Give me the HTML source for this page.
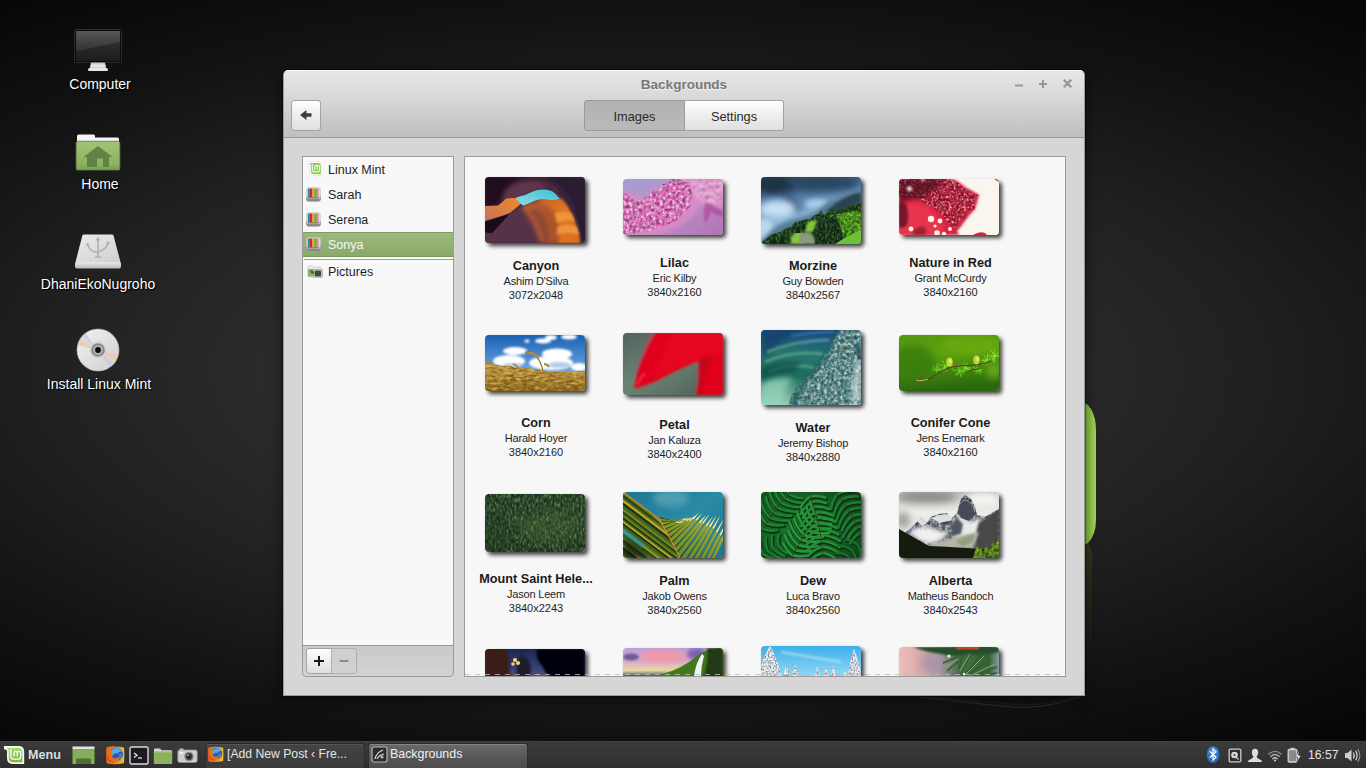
<!DOCTYPE html>
<html lang="en">
<head>
<meta charset="utf-8">
<title>Backgrounds</title>
<style>
*{box-sizing:border-box;margin:0;padding:0}
html,body{width:1366px;height:768px;overflow:hidden;background:#0c0c0c}
body{position:relative;font-family:"Liberation Sans","DejaVu Sans",sans-serif;color:#222;
  background:radial-gradient(ellipse 1090px 460px at 650px 372px,#343434 0%,#2d2d2d 30%,#202020 56%,#121212 78%,#070707 100%);
}
.abs{position:absolute}
/* desktop icons */
.dlabel{position:absolute;width:200px;text-align:center;color:#fff;font-size:14px;line-height:16px;white-space:nowrap;
  text-shadow:1px 1px 1px #000,0 0 2px rgba(0,0,0,.8)}
/* window */
#win{position:absolute;left:283px;top:70px;width:802px;height:626px;background:#d6d6d6;border:1px solid #9a9a9a;border-top-color:#f4f4f4;
  border-radius:5px 5px 0 0;box-shadow:0 3px 14px rgba(0,0,0,.55),0 0 0 1px rgba(0,0,0,.35)}
#hdr{position:absolute;left:0;top:0;width:800px;height:67px;border-radius:4px 4px 0 0;
  background:linear-gradient(#e7e7e7 0%,#dcdcdc 30%,#bfbfbf 100%);border-bottom:1px solid #9a9a9a}
#title{position:absolute;left:0;width:800px;top:5px;text-align:center;font-weight:bold;font-size:13.5px;line-height:18px;color:#787878;text-shadow:0 1px 0 rgba(255,255,255,.6)}
.btn{position:absolute;border:1px solid #a3a3a3;border-radius:3px;background:linear-gradient(#fefefe,#dfdfdf);font-size:12.8px;color:#2a2a2a;text-align:center}
.btn.on{background:linear-gradient(#b2b2b2,#bababa);border-color:#9a9a9a}
/* sidebar */
#side{position:absolute;left:18px;top:85px;width:152px;height:490px;background:#f8f8f8;border:1px solid #9b9b9b}
.row{position:absolute;left:0;width:150px;height:25px;font-size:12.5px;line-height:27px;padding-left:25px;color:#1e1e1e;white-space:nowrap}
.row svg{position:absolute;left:3.5px;top:4px}
#sidebar-tb{position:absolute;left:18px;top:574px;width:152px;height:32px;border:1px solid #9b9b9b;border-radius:0 0 4px 4px;background:linear-gradient(#c9c9c9,#d3d3d3)}
/* icon view */
#view{position:absolute;left:180px;top:85px;width:602px;height:521px;background:#f7f7f7;border:1px solid #9b9b9b;overflow:hidden}
.th{position:absolute;width:100px;border-radius:4px;overflow:hidden;box-shadow:3px 3px 4px rgba(0,0,0,.75)}
.th svg{display:block}
.cap{position:absolute;width:138px;text-align:center;white-space:nowrap;color:#1f1f1f;font-size:11px;line-height:14.4px;letter-spacing:-.2px}
.cap i{font-style:normal;letter-spacing:0}
.cap b{display:block;font-size:12.7px;line-height:16px;color:#1a1a1a;letter-spacing:0}
/* panel */
#panel{position:absolute;left:0;top:741px;width:1366px;height:27px;background:linear-gradient(#3b3b3b,#353535 50%,#2f2f2f);border-top:1px solid #404040;color:#e8e8e8;font-size:13.6px}
</style>
</head>
<body>

<svg width="0" height="0" style="position:absolute"><defs>
  <g id="bookico"><rect x=".3" y=".3" width="15.400" height="15.200" rx="2.500" fill="#c9c9c9"/><rect x=".3" y="9" width="15.400" height="6.500" rx="2.500" fill="#8a8a8a"/><rect x="1.300" y="1" width="13.400" height="11.800" rx="1.200" fill="#dedede"/><rect x="2" y="1.600" width="1.600" height="9.600" fill="#2c7fc4"/><rect x="3.600" y="1.600" width="3.300" height="9.600" fill="#d02a1e"/><rect x="6.900" y="1.600" width="1.900" height="9.600" fill="#f4a800"/><rect x="8.800" y="1.600" width="2.800" height="9.600" fill="#7aa43a"/><rect x="11.600" y="1.600" width="2" height="9.600" fill="#e58aa8"/><rect x="2" y="11" width="11.600" height="1.300" fill="#6e6e6e"/></g>
  <g id="ffx"><defs><linearGradient id="ffg" x1="0" y1="0" x2="1" y2="0"><stop offset="0" stop-color="#e4641a"/><stop offset=".6" stop-color="#ee8c1c"/><stop offset="1" stop-color="#f6c524"/></linearGradient></defs>
    <path d="M1.500 1.200q4-1 8.500-.8 5 0 9 1.200 .6 7 0 15.500-4 1.200-9 1.200t-8.500-1q-.8-8 0-16.100z" fill="url(#ffg)"/>
    <circle cx="11.200" cy="8.300" r="6.700" fill="#2a5cb8"/>
    <path d="M6 5q3-4 8-3 3 1.500 3.500 4-2-1-3.500 0-1.500 2-4 1.500-2 .5-2.500 2.500-2-2-1.500-5z" fill="#58a8e6"/>
    <path d="M15 7q2 1 2 3.500-1 3-3.500 4 1.500-2 .5-4 0-2 1-3.500z" fill="#3f84d8"/>
    <path d="M1.500 3.500q1.500 0 2.500 1.500 1.500-2 3-2-1.500 2-1 4 1 0 2 1-1.500 1-1 2.500 1 2 3.500 2 2.500-.5 3.500-2 .5 2.500-1.500 4.500-3 2-6.500 1-3.500-1.500-4.500-5.500-.5-3.500 0-7z" fill="#e8701a"/>
    <path d="M1.500 4q0 5 2 8.500 2.500 3.500 6.500 4-4.500 .5-7-3-2.500-4-1.500-9.500z" fill="#c8401a"/>
  </g>
</defs></svg>
<!-- WALLPAPER-EXTRAS -->
<svg class="abs" style="left:1070px;top:395px" width="40" height="310" viewBox="0 0 40 310">
  <defs><linearGradient id="mg" x1="0" y1="0" x2="1" y2="0"><stop offset="0" stop-color="#6f9f34"/><stop offset=".7" stop-color="#8cc443"/><stop offset="1" stop-color="#a4d65a"/></linearGradient>
  <linearGradient id="mr" x1="0" y1="0" x2="0" y2="1"><stop offset="0" stop-color="#31451c" stop-opacity=".75"/><stop offset="1" stop-color="#1a2410" stop-opacity="0"/></linearGradient></defs>
  <path d="M0 2q14 2 21 12 5 8 5 22v88q0 16-8 24-6 5-18 6z" fill="url(#mg)"/>
  <path d="M0 154q12-1 18-6 6 6 4 30v100q0 20-22 24z" fill="url(#mr)"/>
</svg>

<svg class="abs" style="left:900px;top:690px" width="200" height="24" viewBox="0 0 200 24"><path d="M20 7Q80 14 118 17.500Q150 18 186 5" fill="none" stroke="#2f3d25" stroke-width="1.200" opacity=".75"/><path d="M30 7Q90 12 120 15Q150 15 180 5" fill="none" stroke="#252e20" stroke-width="1" opacity=".6"/></svg>
<!-- DESKTOP-ICONS -->
<svg class="abs" style="left:68px;top:24px" width="60" height="52" viewBox="0 0 60 52">
  <defs>
    <linearGradient id="scr" x1="0" y1="0" x2="0" y2="1"><stop offset="0" stop-color="#4a4a4a"/><stop offset=".5" stop-color="#2a2a2a"/><stop offset="1" stop-color="#1c1c1c"/></linearGradient>
    <linearGradient id="std" x1="0" y1="0" x2="0" y2="1"><stop offset="0" stop-color="#bdbdbd"/><stop offset=".6" stop-color="#f2f2f2"/><stop offset="1" stop-color="#b5b5b5"/></linearGradient>
  </defs>
  <rect x="6.5" y="5.5" width="47" height="33" rx="1" fill="#0b0b0b" stroke="#2c2c2c"/>
  <rect x="8" y="7" width="44" height="30" fill="url(#scr)"/>
  <path d="M8 7h44v11L8 27z" fill="#fff" opacity=".08"/>
  <path d="M23 38.5h14l1.2 6H21.800z" fill="url(#std)"/>
  <rect x="20" y="44" width="20" height="3" rx="1.5" fill="#e6e6e6"/>
</svg>
<div class="dlabel" style="left:0px;top:76.4px;">Computer</div>

<svg class="abs" style="left:70px;top:130px" width="56" height="44" viewBox="0 0 56 44">
  <defs>
    <linearGradient id="fld" x1="0" y1="0" x2="0" y2="1"><stop offset="0" stop-color="#a3c377"/><stop offset=".8" stop-color="#8db160"/><stop offset="1" stop-color="#7a9c50"/></linearGradient>
  </defs>
  <path d="M7 11V6.200Q7 4.500 8.700 4.500H23.500Q25 4.500 25 6V7.500H47.500Q49 7.500 49 9V12z" fill="#f4f4f4"/>
  <path d="M7 10h42v2H7z" fill="#d8d8d8"/>
  <rect x="6.200" y="11.500" width="43.600" height="28.500" rx="1.500" fill="url(#fld)" stroke="#6c8c48" stroke-width=".8"/>
  <path d="M28 16L42.500 27H39V37H33V28.500H27V37H17V27H13.500z" fill="#5f8246"/>
</svg>
<div class="dlabel" style="left:0px;top:176.4px;">Home</div>

<svg class="abs" style="left:70px;top:230px" width="56" height="44" viewBox="0 0 56 44">
  <defs>
    <linearGradient id="drv" x1="0" y1="0" x2="1" y2="1"><stop offset="0" stop-color="#ececec"/><stop offset="1" stop-color="#cfcfcf"/></linearGradient>
    <linearGradient id="drf" x1="0" y1="0" x2="0" y2="1"><stop offset="0" stop-color="#e9e9e9"/><stop offset="1" stop-color="#b9b9b9"/></linearGradient>
  </defs>
  <path d="M12.500 5Q13 4.500 14 4.500H42Q43 4.500 43.500 5.500L50.500 32H5.500z" fill="url(#drv)"/>
  <path d="M5 33.500Q5 32 6.500 32H49.500Q51 32 51 33.500V36.500Q51 38.500 49 38.500H7Q5 38.500 5 36.500z" fill="url(#drf)"/>
  <g fill="none" stroke="#b2b2b2" stroke-width="1.600" stroke-linecap="round"><path d="M28 9v18"/><path d="M18 15q2 7 10 7.500"/><path d="M38 13q-1 6 -10 9"/><path d="M25.500 27h5"/></g>
  <path d="M28 7l2.800 3.500h-5.600z" fill="#b2b2b2"/><circle cx="17.500" cy="14.500" r="1.500" fill="#b2b2b2"/><rect x="36.500" y="11.500" width="3" height="2.600" fill="#b2b2b2"/>
</svg>
<div class="dlabel" style="left:-2px;top:276.4px;">DhaniEkoNugroho</div>

<svg class="abs" style="left:74px;top:326px" width="48" height="48" viewBox="0 0 48 48">
  <defs>
    <filter id="cdb"><feGaussianBlur stdDeviation=".7"/></filter><linearGradient id="cdg" x1="0" y1="0" x2="1" y2="1"><stop offset="0" stop-color="#f5f5f5"/><stop offset=".5" stop-color="#e0e0e0"/><stop offset="1" stop-color="#cfcfcf"/></linearGradient>
  </defs>
  <circle cx="24" cy="24" r="21" fill="url(#cdg)"/>
  <g transform="rotate(-20 24 24)" filter="url(#cdb)">
  <path d="M24 24L7 13A21 21 0 0 1 10.500 8z" fill="#f4c2b2" opacity=".85"/>
  <path d="M24 24L10.500 8A21 21 0 0 1 14 5.500z" fill="#c4e8b2" opacity=".85"/>
  <path d="M24 24L14 5.500A21 21 0 0 1 18 4z" fill="#d6bef0" opacity=".85"/>
  <path d="M24 24L41 35A21 21 0 0 1 37.500 40z" fill="#f4c2b2" opacity=".85"/>
  <path d="M24 24L37.500 40A21 21 0 0 1 34 42.500z" fill="#c4e8b2" opacity=".85"/>
  <path d="M24 24L34 42.500A21 21 0 0 1 30 44z" fill="#d6bef0" opacity=".85"/>
  </g>
  <circle cx="24" cy="24" r="21" fill="none" stroke="#bdbdbd" stroke-width=".6"/>
  <circle cx="24" cy="24" r="8.400" fill="#d4d4d4"/>
  <circle cx="24" cy="24" r="6.800" fill="#8a8a8a"/>
  <circle cx="24" cy="24" r="4.800" fill="#b4b4b4"/>
  <circle cx="24" cy="24" r="2.900" fill="#0c0c0c"/>
</svg>
<div class="dlabel" style="left:-1px;top:376.4px;">Install Linux Mint</div>

<div id="win">
  <div id="hdr">
    <div id="title">Backgrounds</div>
    <!-- WINCTL -->
    <svg class="abs" style="left:724px;top:3px" width="70" height="20" viewBox="0 0 70 20">
      <g fill="none" stroke="#969696" stroke-width="2">
        <path d="M7 11.500h8"/>
        <path d="M31 10h8M35 6v8"/>
        <path d="M55.800 5.800l7.400 7.400M63.200 5.800l-7.400 7.400" stroke-width="2.300"/>
      </g>
    </svg>
    <!-- TOOLBAR -->
    <div class="btn" style="left:7px;top:29px;width:30px;height:31px">
      <svg class="abs" style="left:6px;top:6px" width="16" height="16" viewBox="0 0 16 16"><path d="M2 8l6.500-5v3.300H13.500v3.400H8.500V13z" fill="#3c3c3c"/></svg>
    </div>
    <div class="btn on" style="left:300px;top:29px;width:101px;height:31px;border-radius:3px 0 0 3px;line-height:31px">Images</div>
    <div class="btn" style="left:400px;top:29px;width:100px;height:31px;border-radius:0 3px 3px 0;line-height:31px;border-left-color:#9a9a9a">Settings</div>
  </div>
  <div id="side">
    <!-- SIDEROWS -->
    <div class="row" style="top:0">
      <svg style="top:3.500px" width="15.500" height="15" viewBox="-.5 -.5 21.200 19" preserveAspectRatio="none"><path d="M0 0H14.500Q20.200 0 20.200 5.700V18H9Q3 18 3 12V5Q3 3.200 0 3.200z" fill="#fff" stroke="#dadada" stroke-width=".8"/><path d="M2.200 2H14.300Q18.400 2 18.400 6V16.300H9.200Q4.800 16.300 4.800 12V4.600Q4.800 2.800 2.200 2z" fill="#8fcc52"/><path d="M6.800 3.200V10.800Q6.800 13.200 9.200 13.200H14.400Q16.600 13.200 16.600 10.800V7.200Q16.600 5.300 14.950 5.300Q13.300 5.300 13.300 7.200V10.600M13.300 7.200Q13.300 5.300 11.650 5.300Q10 5.300 10 7.200V10.600" fill="none" stroke="#fff" stroke-width="1.300"/></svg>
      Linux Mint</div>
    <div class="row" style="top:25px"><svg style="left:3px;top:4.500px" width="15" height="15" viewBox="0 0 16 16"><use href="#bookico"/></svg>Sarah</div>
    <div class="row" style="top:50px"><svg style="left:3px;top:4.500px" width="15" height="15" viewBox="0 0 16 16"><use href="#bookico"/></svg>Serena</div>
    <div class="row" style="top:75px;height:24.5px;background:linear-gradient(#9cb97e,#8aa968);border-top:1px solid #7f9a62;border-bottom:1px solid #7d985f;color:#f6f6f6;line-height:25px"><svg style="left:3px;top:3.500px" width="15" height="15" viewBox="0 0 16 16"><use href="#bookico"/></svg>Sonya</div>
    <div class="abs" style="left:1px;top:101.5px;width:149px;height:1px;background:#9f9f9f"></div>
    <div class="row" style="top:102px">
      <svg width="16" height="16" viewBox="0 0 16 16"><path d="M.800 4q0-1 1-1h3.500l1 1.200h6.900q1 0 1 1v7.600q0 1-1 1H1.800q-1 0-1-1z" fill="#eee" stroke="#bdbdbd" stroke-width=".6"/><rect x="1" y="6" width="12.800" height="7.600" rx=".8" fill="#8bb35f"/><rect x="6.500" y="6.500" width="8.800" height="8" fill="#f4f4f4" stroke="#9a9a9a" stroke-width=".6"/><rect x="7.500" y="7.500" width="6.800" height="6" fill="#3e4a37"/><path d="M3 8.500q1.500-1.500 3-.5t1 2.500q-2 .5-3-.5z" fill="#555"/></svg>
      Pictures</div>
  </div>
  <div id="sidebar-tb">
    <!-- SIDEBTNS -->
    <div class="btn" style="left:3px;top:2px;width:26px;height:26px;border-radius:3px 0 0 3px"><svg class="abs" style="left:6px;top:6px" width="12" height="12" viewBox="0 0 12 12"><path d="M1 6h10M6 1v10" stroke="#1a1a1a" stroke-width="2" fill="none"/></svg></div>
    <div class="btn" style="left:28px;top:2px;width:26px;height:26px;border-radius:0 3px 3px 0;background:linear-gradient(#cfcfcf,#d2d2d2);border-color:#b0b0b0"><svg class="abs" style="left:6px;top:6px" width="12" height="12" viewBox="0 0 12 12"><path d="M1.500 6h9" stroke="#8e8e8e" stroke-width="2" fill="none"/></svg></div>
  </div>
  <div id="view">
    <!-- THUMBS -->
    <svg width="0" height="0" style="position:absolute"><defs>
      <filter id="b1" x="-30%" y="-30%" width="160%" height="160%"><feGaussianBlur stdDeviation="1"/></filter>
      <filter id="b2" x="-50%" y="-50%" width="200%" height="200%"><feGaussianBlur stdDeviation="2"/></filter>
      <filter id="b3" x="-60%" y="-60%" width="220%" height="220%"><feGaussianBlur stdDeviation="3.500"/></filter>
      <filter id="bh" x="-5%" y="-5%" width="110%" height="110%"><feGaussianBlur stdDeviation=".5"/></filter>
      <filter id="gr1" x="0" y="0" width="100%" height="100%" color-interpolation-filters="sRGB"><feTurbulence type="fractalNoise" baseFrequency=".3" numOctaves="2" seed="4" result="n"/><feColorMatrix in="n" type="matrix" values="0 0 0 0 1 0 0 0 0 1 0 0 0 0 1 3 0 0 0 -1.25"/><feComponentTransfer result="w"><feFuncA type="linear" slope="0.65"/></feComponentTransfer><feColorMatrix in="n" type="matrix" values="0 0 0 0 0 0 0 0 0 0 0 0 0 0 0 0 3 0 0 -1.3"/><feComponentTransfer result="k"><feFuncA type="linear" slope="0.4"/></feComponentTransfer><feComposite in="w" in2="SourceAlpha" operator="in" result="w2"/><feComposite in="k" in2="SourceAlpha" operator="in" result="k2"/><feMerge><feMergeNode in="SourceGraphic"/><feMergeNode in="w2"/><feMergeNode in="k2"/></feMerge></filter>
      <filter id="gr2" x="0" y="0" width="100%" height="100%" color-interpolation-filters="sRGB"><feTurbulence type="fractalNoise" baseFrequency=".55" numOctaves="2" seed="9" result="n"/><feColorMatrix in="n" type="matrix" values="0 0 0 0 1 0 0 0 0 1 0 0 0 0 1 2.4 0 0 0 -1.1"/><feComponentTransfer result="w"><feFuncA type="linear" slope="0.5"/></feComponentTransfer><feColorMatrix in="n" type="matrix" values="0 0 0 0 0 0 0 0 0 0 0 0 0 0 0 0 2.8 0 0 -1.15"/><feComponentTransfer result="k"><feFuncA type="linear" slope="0.45"/></feComponentTransfer><feComposite in="w" in2="SourceAlpha" operator="in" result="w2"/><feComposite in="k" in2="SourceAlpha" operator="in" result="k2"/><feMerge><feMergeNode in="SourceGraphic"/><feMergeNode in="w2"/><feMergeNode in="k2"/></feMerge></filter>
      <filter id="gr3" x="0" y="0" width="100%" height="100%" color-interpolation-filters="sRGB"><feTurbulence type="fractalNoise" baseFrequency=".12 .3" numOctaves="2" seed="2" result="n"/><feColorMatrix in="n" type="matrix" values="0 0 0 0 1 0 0 0 0 1 0 0 0 0 1 2.6 0 0 0 -1.15"/><feComponentTransfer result="w"><feFuncA type="linear" slope="0.5"/></feComponentTransfer><feColorMatrix in="n" type="matrix" values="0 0 0 0 0 0 0 0 0 0 0 0 0 0 0 0 2.6 0 0 -1.15"/><feComponentTransfer result="k"><feFuncA type="linear" slope="0.4"/></feComponentTransfer><feComposite in="w" in2="SourceAlpha" operator="in" result="w2"/><feComposite in="k" in2="SourceAlpha" operator="in" result="k2"/><feMerge><feMergeNode in="SourceGraphic"/><feMergeNode in="w2"/><feMergeNode in="k2"/></feMerge></filter>
      <filter id="grg" x="0" y="0" width="100%" height="100%" color-interpolation-filters="sRGB"><feTurbulence type="fractalNoise" baseFrequency=".3" numOctaves="2" seed="7" result="n"/><feColorMatrix in="n" type="matrix" values="0 0 0 0 0.62 0 0 0 0 0.86 0 0 0 0 0.22 3 0 0 0 -1.25"/><feComponentTransfer result="w"><feFuncA type="linear" slope="0.7"/></feComponentTransfer><feColorMatrix in="n" type="matrix" values="0 0 0 0 0.03 0 0 0 0 0.16 0 0 0 0 0.07 0 3 0 0 -1.25"/><feComponentTransfer result="k"><feFuncA type="linear" slope="0.7"/></feComponentTransfer><feComposite in="w" in2="SourceAlpha" operator="in" result="w2"/><feComposite in="k" in2="SourceAlpha" operator="in" result="k2"/><feMerge><feMergeNode in="SourceGraphic"/><feMergeNode in="w2"/><feMergeNode in="k2"/></feMerge></filter>
      <filter id="grf" x="0" y="0" width="100%" height="100%" color-interpolation-filters="sRGB"><feTurbulence type="fractalNoise" baseFrequency=".45 .3" numOctaves="2" seed="11" result="n"/><feColorMatrix in="n" type="matrix" values="0 0 0 0 0.42 0 0 0 0 0.6 0 0 0 0 0.3 3 0 0 0 -1.2"/><feComponentTransfer result="w"><feFuncA type="linear" slope="0.6"/></feComponentTransfer><feColorMatrix in="n" type="matrix" values="0 0 0 0 0.06 0 0 0 0 0.14 0 0 0 0 0.08 0 3 0 0 -1.2"/><feComponentTransfer result="k"><feFuncA type="linear" slope="0.75"/></feComponentTransfer><feComposite in="w" in2="SourceAlpha" operator="in" result="w2"/><feComposite in="k" in2="SourceAlpha" operator="in" result="k2"/><feMerge><feMergeNode in="SourceGraphic"/><feMergeNode in="w2"/><feMergeNode in="k2"/></feMerge></filter>
      <filter id="grr" x="0" y="0" width="100%" height="100%" color-interpolation-filters="sRGB"><feTurbulence type="fractalNoise" baseFrequency=".4" numOctaves="2" seed="13" result="n"/><feColorMatrix in="n" type="matrix" values="0 0 0 0 1 0 0 0 0 0.9 0 0 0 0 0.88 3 0 0 0 -1.3"/><feComponentTransfer result="w"><feFuncA type="linear" slope="0.75"/></feComponentTransfer><feColorMatrix in="n" type="matrix" values="0 0 0 0 0.3 0 0 0 0 0.02 0 0 0 0 0.08 0 3 0 0 -1.2"/><feComponentTransfer result="k"><feFuncA type="linear" slope="0.7"/></feComponentTransfer><feComposite in="w" in2="SourceAlpha" operator="in" result="w2"/><feComposite in="k" in2="SourceAlpha" operator="in" result="k2"/><feMerge><feMergeNode in="SourceGraphic"/><feMergeNode in="w2"/><feMergeNode in="k2"/></feMerge></filter>
      <filter id="grm" x="0" y="0" width="100%" height="100%" color-interpolation-filters="sRGB"><feTurbulence type="fractalNoise" baseFrequency=".5 .22" numOctaves="2" seed="21" result="n"/><feColorMatrix in="n" type="matrix" values="0 0 0 0 0.4 0 0 0 0 0.55 0 0 0 0 0.3 3.2 0 0 0 -1.3"/><feComponentTransfer result="w"><feFuncA type="linear" slope="0.75"/></feComponentTransfer><feColorMatrix in="n" type="matrix" values="0 0 0 0 0.08 0 0 0 0 0.16 0 0 0 0 0.1 0 3.2 0 0 -1.3"/><feComponentTransfer result="k"><feFuncA type="linear" slope="0.8"/></feComponentTransfer><feComposite in="w" in2="SourceAlpha" operator="in" result="w2"/><feComposite in="k" in2="SourceAlpha" operator="in" result="k2"/><feMerge><feMergeNode in="SourceGraphic"/><feMergeNode in="w2"/><feMergeNode in="k2"/></feMerge></filter>
      <filter id="gro" x="0" y="0" width="100%" height="100%" color-interpolation-filters="sRGB"><feTurbulence type="fractalNoise" baseFrequency=".16 .4" numOctaves="2" seed="5" result="n"/><feColorMatrix in="n" type="matrix" values="0 0 0 0 0.93 0 0 0 0 0.8 0 0 0 0 0.45 3 0 0 0 -1.25"/><feComponentTransfer result="w"><feFuncA type="linear" slope="0.6"/></feComponentTransfer><feColorMatrix in="n" type="matrix" values="0 0 0 0 0.35 0 0 0 0 0.24 0 0 0 0 0.05 0 3 0 0 -1.25"/><feComponentTransfer result="k"><feFuncA type="linear" slope="0.6"/></feComponentTransfer><feComposite in="w" in2="SourceAlpha" operator="in" result="w2"/><feComposite in="k" in2="SourceAlpha" operator="in" result="k2"/><feMerge><feMergeNode in="SourceGraphic"/><feMergeNode in="w2"/><feMergeNode in="k2"/></feMerge></filter>
    </defs></svg>

    <!-- Canyon -->
    <div class="th" style="left:20px;top:20px;height:66px"><svg width="100" height="66" viewBox="0 0 100 66">
      <defs><linearGradient id="cy1" x1="0" y1="0" x2="1" y2="1"><stop offset="0" stop-color="#261224"/><stop offset=".45" stop-color="#4a2a40"/><stop offset="1" stop-color="#2a1830"/></linearGradient>
      <linearGradient id="cy2" x1="0" y1="0" x2="1" y2="1"><stop offset="0" stop-color="#c8602a"/><stop offset=".5" stop-color="#e27a26"/><stop offset="1" stop-color="#d86a1e"/></linearGradient>
      <linearGradient id="cy3" x1="0" y1="1" x2="1" y2="0"><stop offset="0" stop-color="#c9705a"/><stop offset="1" stop-color="#ec8a2c"/></linearGradient>
      <linearGradient id="cy4" x1="0" y1="1" x2="1" y2="0"><stop offset="0" stop-color="#8ddce0"/><stop offset="1" stop-color="#3fc0d6"/></linearGradient></defs>
      <rect width="100" height="66" fill="url(#cy1)"/>
      <path d="M0 0h34q-14 8-18 22l-4 6-12 2z" fill="#22101f" filter="url(#b2)"/>
      <path d="M18 18q6-12 22-14 14-2 24 6-14 2-22 8-10 2-16 8-4 4-8 0z" fill="#6a3a52" opacity=".8" filter="url(#b2)"/>
      <path d="M62 0h38v66h-4q-2-24-12-40-8-14-22-26z" fill="#2c1a32" filter="url(#b1)"/>
      <path d="M70 6q14 10 20 30 4 14 6 30" fill="none" stroke="#4a3050" stroke-width="2" opacity=".6" filter="url(#b1)"/>
      <path d="M0 46q14-4 24-9 10-6 16-10 8-4 14-3l12 0q6 0 10-1 8 10 14 24 4 10 5 19h-95z" fill="#56324a" filter="url(#b1)"/>
      <path d="M36 31q10-9 26-8 10 0 14-1 8 8 12 20 4 10 7 24h-40q-6-22-19-35z" fill="#b25a32" filter="url(#b2)"/><path d="M44 34q8-4 14 2 8 10 8 30h-8q-2-18-14-32z" fill="#7a3c3a" opacity=".6" filter="url(#b2)"/>
      <path d="M52 23q12-2 24-1 6 6 10 14 4 8 6 16 2 6 3 14h-22q2-10-2-20-6-14-19-23z" fill="url(#cy2)" filter="url(#b1)"/>
      <path d="M56 28q10 0 14 8 6 10 4 30h-10q0-20-8-38z" fill="#a8522a" opacity=".75" filter="url(#b2)"/>
      <path d="M70 36q10-2 16 0l4 8q-10-2-18 2zM72 50q10-4 20 0l2 8q-12-4-22 0z" fill="#f09a40" opacity=".85" filter="url(#b1)"/>
      <path d="M30 21q5-2 10-3 6-3 12-5 5-1 10-.3 3 .6 6 2 4 3 6.700 7-4 1.500-8.700 1.200-6-.8-12-.5-4 1.200-8.300 3-3.500 1.500-7.100 3.100-2-1.200-3.600-2.100-3-2-5-5.400z" fill="url(#cy4)"/>
      <path d="M0 29q7-.2 13-.5 4-3 8-6.700 4-1.200 9-.8 3 2.500 5.600 6-5 4.500-10.200 8.600-5 2.200-10.400 4-7 2-15 4.400z" fill="url(#cy3)" filter="url(#bh)"/>
      <path d="M0 44.700q8-2 15-4.700 5-1 9-2.400-8 9-17 18.400-3 .3-7-1z" fill="#120a14" filter="url(#bh)"/>
    </svg></div>
    <div class="cap" style="left:2px;top:101px"><b>Canyon</b>Ashim D'Silva<br><i>3072x2048</i></div>

    <!-- Lilac -->
    <div class="th" style="left:158px;top:22px;height:56px"><svg width="100" height="56" viewBox="0 0 100 56">
      <defs><linearGradient id="li1" x1="0" y1="0" x2="1" y2="1"><stop offset="0" stop-color="#a59dd2"/><stop offset=".45" stop-color="#b894c8"/><stop offset="1" stop-color="#b273b4"/></linearGradient></defs>
      <rect width="100" height="56" fill="url(#li1)"/>
      <path d="M0 14q10-2 22 6 6-12 22-12 8-8 22-8h34v30q-12 0-24-4-2 10-12 16-14 10-30 14h-34z" fill="#de8cc8" opacity=".8" filter="url(#b2)"/>
      <path d="M66 0h34v22q-12 4-24-2-6-8-10-20z" fill="#efb0de" filter="url(#b2)"/>
      <g filter="url(#bh)"><path d="M0 16q4-4 6 2 4 0 6 6 4-6 8-2 2-6 6-4 2-8 8-6 4-8 10-8 4-6 10-4 2-4 8-2 4 4 6 10 2 8 0 16-2 8-8 10-4 8-12 10-6 4-14 4-6 6-14 4-8 4-26 4z" fill="#e268bc" filter="url(#gr1)"/></g>
      <path d="M82 24q6 0 10 4l8 4v6q-8-2-12-6-2 8-6 12-2-10 0-20z" fill="#b04c9c" opacity=".8" filter="url(#b1)"/>
      <g filter="url(#b1)" opacity=".8"><path d="M68 0h32v20q-8 6-18 2-8-4-12-12z" fill="#ea8ed0" filter="url(#gr1)"/></g>
    </svg></div>
    <div class="cap" style="left:140.5px;top:98px"><b>Lilac</b>Eric Kilby<br><i>3840x2160</i></div>

    <!-- Morzine -->
    <div class="th" style="left:296px;top:20px;height:67px"><svg width="100" height="67" viewBox="0 0 100 67">
      <defs><linearGradient id="mo1" x1="0" y1="0" x2=".25" y2="1"><stop offset="0" stop-color="#2a4058"/><stop offset=".3" stop-color="#48709a"/><stop offset=".6" stop-color="#86b0d6"/><stop offset="1" stop-color="#b0d0ec"/></linearGradient></defs>
      <rect width="100" height="67" fill="url(#mo1)"/>
      <ellipse cx="14" cy="8" rx="20" ry="9" fill="#1e3044" filter="url(#b3)"/>
      <ellipse cx="62" cy="6" rx="36" ry="8" fill="#2c4660" filter="url(#b3)"/>
      <path d="M20 14q10 8 18 20" stroke="#34506e" stroke-width="8" fill="none" opacity=".7" filter="url(#b3)"/>
      <ellipse cx="16" cy="32" rx="18" ry="9" fill="#c8e0f4" filter="url(#b3)"/>
      <ellipse cx="56" cy="27" rx="12" ry="5" fill="#a8cbe8" filter="url(#b2)"/>
      <ellipse cx="4" cy="52" rx="8" ry="10" fill="#bcd8f0" filter="url(#b2)"/>
      <path d="M0 64q8-10 18-16 12-6 24-8 8-2 14-6 10-10 20-12 10-6 24-10v30l-100 31z" fill="#54788e" filter="url(#b2)"/>
      <path d="M66 34q10-10 20-14 8-4 14-4v10q-10 2-18 10-8 6-16 4z" fill="#2c4450" filter="url(#b1)"/>
      <g filter="url(#bh)"><path d="M0 66q4-4 10-8 4-2 10-3 4-4 10-5 4-6 10-6 4-2 10-2 2-4 8-5l2-4 3 5 6-4 3-3 2 4q6-2 11-5 8-2 15-4v41h-100z" fill="#1a3a1e" filter="url(#grf)"/></g>
      <g filter="url(#bh)"><path d="M68 40q6-4 12-3 8-4 20-2v20q-8 4-14 8-8-2-12-10-4-6-6-13z" fill="#4a9420" filter="url(#grg)"/></g>
      <path d="M46 46q6-4 10-2l-4 10-8 2zM30 60q4-6 10-6 4 4 2 13h-12z" fill="#86c63a" filter="url(#b1)"/>
      <path d="M38 58q6-4 12-2 4 4 4 11h-16z" fill="#8a9a7c" filter="url(#b1)"/>
      <g filter="url(#bh)"><path d="M54 67q0-14 4-22l4-8 4 8 4-4 4-4 4 10q4 8 6 22z" fill="#10291a" filter="url(#grf)"/></g>
      <path d="M10 67l3-8 3 8zM18 67l3-10 3 10zM34 56l3-8 3 8zM40 52l2-7 3 7z" fill="#0f2616" filter="url(#bh)"/>
      <path d="M74 67q12-8 26-14v14z" fill="#6cc232"/>
    </svg></div>
    <div class="cap" style="left:279px;top:101px"><b>Morzine</b>Guy Bowden<br><i>3840x2567</i></div>

    <!-- Nature in Red -->
    <div class="th" style="left:434px;top:22px;height:56px"><svg width="100" height="56" viewBox="0 0 100 56">
      <rect width="100" height="56" fill="#faf5ee"/>
      <path d="M0 0h54q8 4 12 8 8 4 14 8-2 8-4 14-6 6-10 12-4 6-8 10l2 4h-60z" fill="#d62444" filter="url(#b1)"/>
      <path d="M0 26q12-6 24 0 12 6 18 16 4 8 2 14h-44z" fill="#e8344e" filter="url(#b2)"/>
      <g filter="url(#bh)"><path d="M0 0h52q4 4 8 4l4 6q6 0 8 4l8 2-6 6 2 8-8 2-2 8-6 2-2 8q-6-2-10-8-6-8-14-14-8-2-14-8-8-2-20-2z" fill="#c01c3a" filter="url(#grr)"/></g>
      <path d="M0 0h44q-4 10-14 14-8 6-16 6-8 2-14 6z" fill="#4a0c1a" opacity=".7" filter="url(#b2)"/>
      <path d="M0 24q6-2 8 4 2 8 0 18-4 4-8 2z" fill="#5a1020" opacity=".8" filter="url(#b1)"/>
      <path d="M14 52q6-6 12-4 2 4 0 8h-12z" fill="#6a1424" opacity=".6" filter="url(#b1)"/>
      <g fill="#fdf2ee" filter="url(#bh)"><circle cx="32" cy="40" r="3.200"/><circle cx="41" cy="42" r="2.400"/><circle cx="38" cy="54" r="2.800"/><circle cx="45" cy="55" r="2.200"/><circle cx="12" cy="50" r="2.400"/><circle cx="36" cy="47" r="1.600"/><circle cx="51" cy="50" r="2"/></g>
      <g fill="#f0dcd8" filter="url(#b1)"><path d="M7 9l4-2 3 3-4 3zM21 0h6l-3 2.500z"/></g>
      <path d="M74 56q6-4 12-2l2 2zM95 0h5v3z" fill="#d62444" filter="url(#bh)"/>
    </svg></div>
    <div class="cap" style="left:416.5px;top:98px"><b>Nature in Red</b>Grant McCurdy<br><i>3840x2160</i></div>
    <!-- Corn -->
    <div class="th" style="left:20px;top:178px;height:56px"><svg width="100" height="56" viewBox="0 0 100 56">
      <defs><linearGradient id="co1" x1="0" y1="0" x2="0" y2="1"><stop offset="0" stop-color="#1c60b4"/><stop offset=".5" stop-color="#5896d6"/><stop offset="1" stop-color="#a4c8ea"/></linearGradient>
      <linearGradient id="co2" x1="0" y1="0" x2="0" y2="1"><stop offset="0" stop-color="#c8a858"/><stop offset=".5" stop-color="#b48c34"/><stop offset="1" stop-color="#8a661c"/></linearGradient></defs>
      <rect width="100" height="56" fill="url(#co1)"/>
      <g fill="#fff" filter="url(#b1)"><ellipse cx="30" cy="16" rx="12" ry="4"/><ellipse cx="24" cy="26" rx="16" ry="6"/><ellipse cx="72" cy="19" rx="15" ry="5.500"/><ellipse cx="66" cy="28" rx="22" ry="7"/><ellipse cx="58" cy="6" rx="8" ry="2.600"/><ellipse cx="66" cy="2.500" rx="6" ry="2.500"/><ellipse cx="84" cy="2" rx="8" ry="2.500"/><ellipse cx="94" cy="32" rx="8" ry="4"/><ellipse cx="42" cy="6" rx="2.500" ry="1.500"/></g>
      <g fill="#b4cdea" filter="url(#b1)"><ellipse cx="74" cy="30" rx="12" ry="3"/><ellipse cx="28" cy="30" rx="10" ry="2"/></g>
      <g filter="url(#bh)"><path d="M0 27q4-2 8 2 4 2 10 2 6-2 12 2 8-2 14 0 6 2 12 2 8 2 16 2 10 0 28-1v20h-100z" fill="url(#co2)" filter="url(#gro)"/></g>
      <path d="M58 36q-2-10-8-16-4-3-10-3" fill="none" stroke="#9a7426" stroke-width="1.100"/>
      <path d="M40 17.500q8 0 14 4.500" fill="none" stroke="#b08a34" stroke-width="2.600" filter="url(#bh)"/>
      <path d="M8 30q-2-3-6-3M34 34q-2-4-6-5M64 32q-2-3-5-3" fill="none" stroke="#a8862e" stroke-width="1.800" filter="url(#bh)"/>
    </svg></div>
    <div class="cap" style="left:2px;top:258px"><b>Corn</b>Harald Hoyer<br><i>3840x2160</i></div>

    <!-- Petal -->
    <div class="th" style="left:158px;top:176px;height:62px"><svg width="100" height="62" viewBox="0 0 100 62">
      <defs><linearGradient id="pe1" x1="0" y1="0" x2="1" y2="1"><stop offset="0" stop-color="#52625e"/><stop offset=".45" stop-color="#6a8474"/><stop offset="1" stop-color="#4c5e54"/></linearGradient></defs>
      <rect width="100" height="62" fill="url(#pe1)"/>
      <path d="M28 0h72v62h-28q4-18 2-34-14 6-34 16-14 8-24 11l-3 1-2-1q3-26 17-55z" fill="#e83040" opacity=".55" filter="url(#b2)"/>
      <path d="M33 0h67v62h-26q4-18 2-35-14 6-34 16-14 8-26 11l-3 1-1.500-1q4-26 21.500-54z" fill="#e0041e" filter="url(#b1)"/>
      <path d="M50 0h50v20q-14 4-26 8-22 6-44 20 8-28 20-48z" fill="#f20a28" opacity=".45" filter="url(#b2)"/>
      <path d="M76 27q6-4 14-6-8 16-12 41h-4q4-18 2-35z" fill="#b00a1a" opacity=".55" filter="url(#b1)"/>
      <path d="M14 52q4-8 8-12" stroke="#f0605a" stroke-width="2" opacity=".6" fill="none" filter="url(#b1)"/>
    </svg></div>
    <div class="cap" style="left:140.5px;top:260px"><b>Petal</b>Jan Kaluza<br><i>3840x2400</i></div>

    <!-- Water -->
    <div class="th" style="left:296px;top:173px;height:75px"><svg width="100" height="75" viewBox="0 0 100 75">
      <defs><linearGradient id="wa1" x1=".2" y1="0" x2=".1" y2="1"><stop offset="0" stop-color="#1c4c7c"/><stop offset=".3" stop-color="#26786e"/><stop offset=".6" stop-color="#1f6c5e"/><stop offset="1" stop-color="#9ad6bc"/></linearGradient></defs>
      <rect width="100" height="75" fill="url(#wa1)"/>
      <path d="M0 0h40q-20 10-40 30z" fill="#173e6c" opacity=".8" filter="url(#b3)"/>
      <g fill="none" stroke="#7ec09a" stroke-width="2.500" opacity=".55" filter="url(#b1)"><path d="M6 22q30-12 62-12M4 32q28-12 58-8M8 42q22-10 46-4"/></g>
      <g fill="none" stroke="#4a8ac0" stroke-width="2" opacity=".6" filter="url(#b1)"><path d="M30 6q20-4 44-4M40 14q14-4 30-4"/></g>
      <path d="M0 54q14-8 32-6-8 10-10 27h-22z" fill="#96d4ba" opacity=".8" filter="url(#b3)"/>
      <path d="M0 38q18-8 40-6-4 6-8 12-14-2-32 8z" fill="#10504a" opacity=".7" filter="url(#b2)"/>
      <g filter="url(#bh)"><path d="M78 0h22v75h-72q2-12 10-20 8-8 14-14 8-10 14-20 6-12 12-21z" fill="#4c8484" filter="url(#gr1)"/></g>
      <path d="M76 0q-6 10-12 22-6 10-14 20-8 8-14 16-6 8-8 17h8q2-12 10-22 10-10 18-22 8-14 16-31z" fill="#1e5c5c" opacity=".65" filter="url(#b1)"/>
      <path d="M94 34q3-4 6-4v40q-5 2-10 5 1-22 4-41z" fill="#e4f0ee" opacity=".6" filter="url(#b2)"/>
      <path d="M94 12q4 4 6 12v6q-6-6-6-18z" fill="#1a3c54" opacity=".7" filter="url(#b1)"/>
    </svg></div>
    <div class="cap" style="left:279px;top:263px"><b>Water</b>Jeremy Bishop<br><i>3840x2880</i></div>

    <!-- Conifer Cone -->
    <div class="th" style="left:434px;top:178px;height:56px"><svg width="100" height="56" viewBox="0 0 100 56">
      <defs><linearGradient id="cc1" x1="0" y1="0" x2=".15" y2="1"><stop offset="0" stop-color="#55980f"/><stop offset=".4" stop-color="#5ea210"/><stop offset="1" stop-color="#2a680e"/></linearGradient></defs>
      <rect width="100" height="56" fill="url(#cc1)"/>
      <ellipse cx="14" cy="26" rx="22" ry="16" fill="#34780f" opacity=".75" filter="url(#b3)"/>
      <ellipse cx="72" cy="10" rx="30" ry="9" fill="#70b00e" opacity=".6" filter="url(#b3)"/>
      <ellipse cx="95" cy="36" rx="8" ry="8" fill="#8ccc28" opacity=".5" filter="url(#b3)"/>
      <g filter="url(#bh)"><path d="M38.0 35.0l-4.2 -4.1M38.0 35.0l1.8 -6.2M38.0 35.0l-0.4 -6.4M38.0 35.0l4.9 0.9M38.0 35.0l5.2 -1.9M38.0 35.0l3.2 -2.3M38.0 35.0l-4.3 0.8M38.0 35.0l-5.1 -1.4M38.0 35.0l4.2 0.3M38.0 35.0l-1.2 6.2M38.0 35.0l0.4 -4.1M38.0 35.0l1.2 -3.8M38.0 35.0l-2.9 -2.7M38.0 35.0l6.2 0.1" stroke="#62cc1e" stroke-width="0.7" fill="none" stroke-linecap="round"/><path d="M46.0 31.0l0.9 3.4M46.0 31.0l5.1 -0.6M46.0 31.0l-1.3 5.2M46.0 31.0l-4.6 -1.1M46.0 31.0l1.5 5.1M46.0 31.0l-2.0 -5.0M46.0 31.0l2.9 -2.3M46.0 31.0l-2.2 2.6M46.0 31.0l1.9 2.5M46.0 31.0l-1.4 4.3M46.0 31.0l4.7 0.1M46.0 31.0l-2.0 3.2" stroke="#7be02a" stroke-width="0.7" fill="none" stroke-linecap="round"/><path d="M60.0 36.0l2.1 -4.6M60.0 36.0l-2.0 4.6M60.0 36.0l-1.1 -3.6M60.0 36.0l3.6 -0.6M60.0 36.0l-0.0 -6.1M60.0 36.0l5.9 0.7M60.0 36.0l-3.6 4.0M60.0 36.0l3.7 0.2M60.0 36.0l2.7 5.9M60.0 36.0l1.9 5.5M60.0 36.0l5.8 -2.7M60.0 36.0l-2.6 3.9M60.0 36.0l-5.9 -0.9M60.0 36.0l4.5 3.7" stroke="#6ad422" stroke-width="0.7" fill="none" stroke-linecap="round"/><path d="M67.0 33.0l1.5 -4.9M67.0 33.0l5.2 1.2M67.0 33.0l3.2 2.1M67.0 33.0l-4.1 -3.4M67.0 33.0l-2.8 4.5M67.0 33.0l-3.6 -1.1M67.0 33.0l-1.4 3.1M67.0 33.0l3.0 1.6M67.0 33.0l-2.0 -5.1M67.0 33.0l1.6 2.7M67.0 33.0l4.3 -0.4M67.0 33.0l-3.0 2.0" stroke="#84e432" stroke-width="0.7" fill="none" stroke-linecap="round"/><path d="M78.0 35.0l-4.2 -2.8M78.0 35.0l-3.9 1.1M78.0 35.0l5.0 1.8M78.0 35.0l4.1 0.9M78.0 35.0l1.8 -2.8M78.0 35.0l-0.6 -5.3M78.0 35.0l-3.4 -3.6M78.0 35.0l3.2 2.5M78.0 35.0l3.0 4.1M78.0 35.0l-1.1 4.0M78.0 35.0l5.1 -0.0M78.0 35.0l4.1 -0.6" stroke="#6ad422" stroke-width="0.7" fill="none" stroke-linecap="round"/><path d="M88.0 25.0l-5.8 0.4M88.0 25.0l-4.4 0.6M88.0 25.0l-3.3 2.3M88.0 25.0l-4.7 4.6M88.0 25.0l5.3 -1.4M88.0 25.0l-4.6 0.0M88.0 25.0l3.7 2.3M88.0 25.0l1.2 -6.1M88.0 25.0l-3.8 4.6M88.0 25.0l0.9 -5.6M88.0 25.0l-3.0 -5.0M88.0 25.0l-3.7 4.3M88.0 25.0l-1.0 5.0M88.0 25.0l0.7 -5.6" stroke="#7be02a" stroke-width="0.7" fill="none" stroke-linecap="round"/><path d="M96.0 21.0l-1.8 6.2M96.0 21.0l-3.1 -4.3M96.0 21.0l5.2 0.4M96.0 21.0l-0.0 5.6M96.0 21.0l-5.9 1.4M96.0 21.0l-3.6 -4.8M96.0 21.0l-3.2 4.5M96.0 21.0l-0.5 -6.1M96.0 21.0l-3.6 5.0M96.0 21.0l3.9 -4.1M96.0 21.0l6.4 -1.0M96.0 21.0l-5.2 -0.6" stroke="#8fe83c" stroke-width="0.7" fill="none" stroke-linecap="round"/><path d="M53.0 33.0l2.0 3.5M53.0 33.0l3.1 -1.3M53.0 33.0l-1.4 -3.6M53.0 33.0l-0.3 -2.7M53.0 33.0l0.7 -3.5M53.0 33.0l-1.6 -2.8M53.0 33.0l-2.8 -2.8M53.0 33.0l-2.5 -2.9" stroke="#56b81a" stroke-width="0.7" fill="none" stroke-linecap="round"/></g>
      <path d="M17 45q10 2 20-5 8-6 16-8 12-2 24-2 8-1 16-4" fill="none" stroke="#5a3a1c" stroke-width="1.200"/>
      <path d="M68 37q6-3 12-3" fill="none" stroke="#5a3a1c" stroke-width="1"/>
      <path d="M17 45q6 1.500 12-1" fill="none" stroke="#c0a878" stroke-width="1.200"/>
      <ellipse cx="50.500" cy="27" rx="3.200" ry="4.600" fill="#c6d838"/><ellipse cx="51.500" cy="26" rx="1.500" ry="2.500" fill="#e0ea6a"/>
      <ellipse cx="77.500" cy="25" rx="3.200" ry="4.400" fill="#c2d634"/><ellipse cx="78.500" cy="24" rx="1.500" ry="2.400" fill="#dce866"/>
    </svg></div>
    <div class="cap" style="left:416.5px;top:258px"><b>Conifer Cone</b>Jens Enemark<br><i>3840x2160</i></div>

    <!-- Mount Saint Helens -->
    <div class="th" style="left:20px;top:337px;height:58px"><svg width="100" height="58" viewBox="0 0 100 58">
      <defs><linearGradient id="ms1" x1="0" y1="0" x2=".3" y2="1"><stop offset="0" stop-color="#223a2a"/><stop offset=".5" stop-color="#2e4a2e"/><stop offset="1" stop-color="#263c24"/></linearGradient></defs>
      <g filter="url(#bh)"><rect width="100" height="58" fill="url(#ms1)" filter="url(#grm)"/></g>
      <ellipse cx="66" cy="34" rx="30" ry="16" fill="#5c7e40" opacity=".22" filter="url(#b3)"/>
      <ellipse cx="10" cy="40" rx="16" ry="20" fill="#18301c" opacity=".3" filter="url(#b3)"/>
    </svg></div>
    <div class="cap" style="left:-3px;top:414px;width:148px"><b>Mount Saint Hele...</b>Jason Leem<br><i>3840x2243</i></div>

    <!-- Palm -->
    <div class="th" style="left:158px;top:335px;height:66px"><svg width="100" height="66" viewBox="0 0 100 66">
      <defs><linearGradient id="pa1" x1="0" y1="0" x2="1" y2="1"><stop offset="0" stop-color="#1a7892"/><stop offset=".5" stop-color="#2b8aa6"/><stop offset="1" stop-color="#1b7694"/></linearGradient>
      <linearGradient id="pa2" x1="0" y1="1" x2=".6" y2="0"><stop offset="0" stop-color="#3e5e18"/><stop offset=".6" stop-color="#7e9226"/><stop offset="1" stop-color="#a8ac3a"/></linearGradient>
      <linearGradient id="pa4" x1="0" y1="0" x2="1" y2="1"><stop offset="0" stop-color="#0c1c0e" stop-opacity="0"/><stop offset="1" stop-color="#0c1c0e" stop-opacity=".0"/></linearGradient>
      <clipPath id="pac"><path d="M0 0L36 27Q45 42 57 66H0z"/></clipPath></defs>
      <rect width="100" height="66" fill="url(#pa1)"/>
      <ellipse cx="48" cy="6" rx="18" ry="9" fill="#78b4c2" opacity=".55" filter="url(#b3)"/>
      <g clip-path="url(#pac)"><rect width="60" height="66" fill="#3a5e1a"/><g filter="url(#bh)"><path d="M-2 -31.5L80 30.0" stroke="#5a7a1c" stroke-width="1.9"/><path d="M-2 -29.3L80 32.2" stroke="#a89428" stroke-width="2.0"/><path d="M-2 -26.9L80 34.6" stroke="#24441a" stroke-width="2.3"/><path d="M-2 -24.1L80 37.4" stroke="#4a6c1a" stroke-width="1.9"/><path d="M-2 -21.9L80 39.6" stroke="#78881e" stroke-width="1.9"/><path d="M-2 -19.6L80 41.9" stroke="#1a3414" stroke-width="2.0"/><path d="M-2 -17.2L80 44.3" stroke="#52741c" stroke-width="1.6"/><path d="M-2 -15.3L80 46.2" stroke="#c0a42a" stroke-width="1.9"/><path d="M-2 -13.0L80 48.5" stroke="#16301a" stroke-width="2.0"/><path d="M-2 -10.6L80 50.9" stroke="#3e621a" stroke-width="2.2"/><path d="M-2 -8.0L80 53.5" stroke="#5a7a1c" stroke-width="1.5"/><path d="M-2 -6.2L80 55.3" stroke="#a89428" stroke-width="1.7"/><path d="M-2 -4.1L80 57.4" stroke="#24441a" stroke-width="1.5"/><path d="M-2 -2.3L80 59.2" stroke="#4a6c1a" stroke-width="2.2"/><path d="M-2 0.3L80 61.8" stroke="#78881e" stroke-width="2.1"/><path d="M-2 2.8L80 64.3" stroke="#1a3414" stroke-width="1.4"/><path d="M-2 4.6L80 66.1" stroke="#52741c" stroke-width="2.4"/><path d="M-2 7.4L80 68.9" stroke="#c0a42a" stroke-width="2.4"/><path d="M-2 10.3L80 71.8" stroke="#16301a" stroke-width="2.1"/><path d="M-2 12.7L80 74.2" stroke="#3e621a" stroke-width="2.0"/><path d="M-2 15.1L80 76.6" stroke="#5a7a1c" stroke-width="1.6"/><path d="M-2 17.0L80 78.5" stroke="#a89428" stroke-width="1.4"/><path d="M-2 18.7L80 80.2" stroke="#24441a" stroke-width="1.9"/><path d="M-2 21.0L80 82.5" stroke="#4a6c1a" stroke-width="1.5"/><path d="M-2 22.8L80 84.3" stroke="#78881e" stroke-width="1.6"/><path d="M-2 24.7L80 86.2" stroke="#1a3414" stroke-width="1.6"/><path d="M-2 26.7L80 88.2" stroke="#52741c" stroke-width="1.4"/><path d="M-2 28.4L80 89.9" stroke="#c0a42a" stroke-width="1.9"/><path d="M-2 30.6L80 92.1" stroke="#16301a" stroke-width="1.8"/><path d="M-2 32.8L80 94.3" stroke="#3e621a" stroke-width="2.2"/><path d="M-2 35.5L80 97.0" stroke="#5a7a1c" stroke-width="1.9"/><path d="M-2 37.8L80 99.3" stroke="#a89428" stroke-width="2.0"/><path d="M-2 40.3L80 101.8" stroke="#24441a" stroke-width="1.9"/><path d="M-2 42.5L80 104.0" stroke="#4a6c1a" stroke-width="2.1"/><path d="M-2 45.0L80 106.5" stroke="#78881e" stroke-width="1.9"/><path d="M-2 47.2L80 108.7" stroke="#1a3414" stroke-width="1.7"/><path d="M-2 49.3L80 110.8" stroke="#52741c" stroke-width="2.4"/><path d="M-2 52.1L80 113.6" stroke="#c0a42a" stroke-width="2.4"/><path d="M-2 55.0L80 116.5" stroke="#16301a" stroke-width="2.2"/><path d="M-2 57.7L80 119.2" stroke="#3e621a" stroke-width="2.1"/><path d="M-2 60.2L80 121.7" stroke="#5a7a1c" stroke-width="1.7"/><path d="M-2 62.3L80 123.8" stroke="#a89428" stroke-width="1.6"/><path d="M-2 64.2L80 125.7" stroke="#24441a" stroke-width="1.7"/><path d="M-2 66.3L80 127.8" stroke="#4a6c1a" stroke-width="1.5"/><path d="M-2 68.0L80 129.5" stroke="#78881e" stroke-width="2.2"/></g>
        <path d="M0 36l22 17-3 3-19-14z" fill="#2a94b0" opacity=".75" filter="url(#bh)"/>
        <path d="M0 46q14 6 26 20h-26z" fill="#0c1c0e" opacity=".75" filter="url(#b2)"/>
        <path d="M0 4l30 22" stroke="#16301a" stroke-width="3" opacity=".5" filter="url(#b1)"/></g>
      <path d="M36 27q8 4 20 3l-6 8-8-2z" fill="#c8daa0" opacity=".85" filter="url(#b1)"/>
      <g filter="url(#bh)"><path d="M36.5 30.3L51.9 31.2L58.0 30.3L52.2 28.3L36.9 26.1zM39.0 33.8L55.4 31.4L61.6 29.2L55.0 28.5L38.6 29.7zM41.7 37.4L58.9 29.7L65.1 25.5L57.8 26.9L40.1 33.6zM44.2 41.3L62.3 30.3L68.7 25.0L60.8 27.8L42.1 37.7zM46.7 45.4L65.6 30.6L72.3 23.8L63.9 28.2L44.2 42.0zM49.3 49.6L69.0 29.4L75.9 20.7L67.0 27.3L46.3 46.6zM51.8 54.2L72.3 30.8L79.4 20.9L70.2 28.9L48.7 51.4zM54.4 59.0L75.6 33.7L83.0 23.0L73.4 31.7L51.2 56.3zM57.0 64.0L79.0 34.2L86.6 21.9L76.7 32.5L53.7 61.5zM59.8 69.7L82.4 37.3L90.1 24.0L80.0 35.6L56.4 67.2zM62.9 75.9L85.8 38.4L93.7 23.2L83.3 36.8L59.3 73.6zM65.9 82.1L89.3 40.3L97.3 23.4L86.7 38.8L62.3 80.0zM68.9 88.4L92.7 44.3L100.9 26.6L90.1 42.9L65.2 86.4zM71.9 94.7L96.1 47.7L104.4 28.8L93.5 46.3L68.2 92.7zM74.9 100.9L99.5 49.7L108.0 29.2L96.9 48.4L71.1 99.1z" fill="url(#pa2)"/><path d="M36.9 26.5L52.1 28.9L37.0 25.2zM38.6 30.1L55.1 29.1L38.5 28.8zM40.3 33.9L58.0 27.5L39.8 32.7zM42.3 38.0L61.1 28.3L41.7 36.9zM44.4 42.3L64.3 28.7L43.7 41.3zM46.6 46.9L67.4 27.8L45.7 46.0zM49.0 51.6L70.6 29.3L48.0 50.7zM51.5 56.5L73.9 32.1L50.5 55.7zM54.0 61.7L77.2 32.8L53.0 60.9zM56.8 67.4L80.5 36.0L55.7 66.7zM59.7 73.8L83.9 37.2L58.6 73.1zM62.6 80.2L87.3 39.2L61.5 79.6zM65.6 86.5L90.7 43.2L64.4 85.9zM68.5 92.9L94.1 46.6L67.4 92.3zM71.5 99.2L97.4 48.7L70.3 98.7z" fill="#1a3a16" opacity=".85"/><path d="M53.2 31.0L58.0 30.3L53.4 29.4zM56.7 30.9L61.6 29.2L56.5 29.4zM60.3 28.8L65.1 25.5L59.7 27.3zM63.7 29.2L68.7 25.0L62.9 27.8zM67.1 29.1L72.3 23.8L66.1 27.9zM70.5 27.5L75.9 20.7L69.4 26.4zM73.9 28.7L79.4 20.9L72.7 27.7zM77.2 31.4L83.0 23.0L76.0 30.3zM80.6 31.6L86.6 21.9L79.4 30.6zM84.0 34.5L90.1 24.0L82.8 33.6zM87.5 35.2L93.7 23.2L86.2 34.3zM91.0 36.7L97.3 23.4L89.6 35.9zM94.4 40.5L100.9 26.6L93.1 39.8zM97.9 43.6L104.4 28.8L96.5 42.9zM101.3 45.3L108.0 29.2L99.9 44.6z" fill="#f4f6e8" opacity=".9"/></g>
      <path d="M0 0L36 27Q45 42 57 66" fill="none" stroke="#dc8c1e" stroke-width="1.200"/>
    </svg></div>
    <div class="cap" style="left:140.5px;top:416px"><b>Palm</b>Jakob Owens<br><i>3840x2560</i></div>

    <!-- Dew -->
    <div class="th" style="left:296px;top:335px;height:66px"><svg width="100" height="66" viewBox="0 0 100 66">
      <defs><radialGradient id="de1" cx=".4" cy=".5" r=".8"><stop offset="0" stop-color="#1c7a2c"/><stop offset=".6" stop-color="#146024"/><stop offset="1" stop-color="#0c3c18"/></radialGradient></defs>
      <rect width="100" height="66" fill="url(#de1)"/>
      <g filter="url(#bh)"><path d="M31.3 63.3Q38.1 65.4 45.4 63.5M31.3 63.3Q25.3 58.7 22.4 51.1M34.1 58.1Q42.0 60.7 50.7 58.7M34.1 58.1Q27.3 52.6 24.0 43.7M37.0 53.0Q46.2 56.2 56.4 54.1M37.0 53.0Q30.6 47.6 27.7 39.0M39.9 47.9Q48.1 51.0 57.4 49.3M39.9 47.9Q31.8 40.8 28.3 29.6M43.0 43.0Q51.9 46.6 62.0 45.0M43.0 43.0Q36.0 36.5 33.2 26.7M46.2 38.2Q56.5 42.7 68.5 41.0M46.2 38.2Q39.0 31.3 36.4 20.9M49.4 33.4Q58.7 37.7 69.7 36.5M49.4 33.4Q42.8 26.7 40.5 16.9M52.8 28.8Q60.7 32.7 70.3 31.9M52.8 28.8Q47.4 23.1 45.7 14.9M56.2 24.2Q63.1 27.8 71.5 27.3M56.2 24.2Q50.8 18.1 49.2 9.4" stroke="#0c3216" stroke-width="3.600" fill="none" stroke-linecap="round" transform="translate(.8 1.200)"/><path d="M1.8 37.0Q8.5 39.6 16.1 38.1M1.8 37.0Q-3.9 32.0 -6.4 24.2M5.3 31.3Q13.3 34.5 22.4 33.1M5.3 31.3Q-0.0 26.3 -2.2 18.7M8.9 25.8Q17.8 29.7 28.1 28.4M8.9 25.8Q2.3 19.3 -0.1 9.6M12.6 20.5Q20.8 24.4 30.5 23.5M12.6 20.5Q6.8 14.5 4.9 5.6M16.4 15.5Q25.6 20.3 36.8 19.6M16.4 15.5Q10.1 8.5 8.2 -1.5M20.2 10.8Q28.5 15.5 38.9 15.1M20.2 10.8Q13.8 3.1 12.2 -7.5M24.1 6.3Q31.5 10.8 40.8 10.8M24.1 6.3Q18.5 -0.9 17.3 -10.7M28.0 2.0Q33.8 5.9 41.3 6.2M28.0 2.0Q23.5 -4.2 22.9 -12.5" stroke="#0c3216" stroke-width="3.600" fill="none" stroke-linecap="round" transform="translate(.8 1.200)"/><path d="M49.1 4.6Q43.3 8.3 40.0 14.9M49.1 4.6Q56.7 3.0 64.5 5.7M51.1 9.7Q43.7 14.1 39.4 22.2M51.1 9.7Q58.0 8.5 65.0 11.3M52.9 15.0Q46.1 18.7 42.0 26.0M52.9 15.0Q60.8 13.9 68.6 17.3M54.6 20.4Q45.5 25.0 39.7 34.3M54.6 20.4Q63.5 19.5 72.3 23.6M56.1 25.9Q47.3 30.0 41.4 38.8M56.1 25.9Q65.1 25.2 73.7 29.7M57.5 31.5Q48.7 35.3 42.6 43.7M57.5 31.5Q66.8 31.1 75.6 36.0M58.7 37.2Q50.2 40.5 44.2 48.3M58.7 37.2Q68.4 37.1 77.3 42.4M59.7 43.0Q50.9 46.1 44.6 53.8M59.7 43.0Q69.8 43.2 78.9 49.0M60.6 48.9Q52.1 51.6 45.8 58.9M60.6 48.9Q70.0 49.3 78.5 55.1M61.3 54.8Q53.1 57.2 46.9 64.0M61.3 54.8Q70.0 55.5 77.7 61.1M61.8 60.9Q54.7 62.7 49.3 68.4M61.8 60.9Q68.1 61.6 73.6 65.8" stroke="#0c3216" stroke-width="3.600" fill="none" stroke-linecap="round" transform="translate(.8 1.200)"/><path d="M76.2 2.5Q71.3 8.6 70.2 16.9M76.2 2.5Q83.1 -1.5 91.7 -1.4M80.4 7.6Q74.3 14.4 72.5 24.0M80.4 7.6Q87.8 3.8 96.8 4.4M84.3 12.9Q77.5 19.7 75.2 29.7M84.3 12.9Q91.9 9.4 100.9 10.4M87.8 18.3Q80.2 25.2 77.1 35.9M87.8 18.3Q96.9 14.7 107.2 16.4M91.1 23.8Q84.1 29.5 80.9 38.6M91.1 23.8Q99.1 21.0 108.0 23.0M94.0 29.4Q86.0 35.3 82.0 45.1M94.0 29.4Q103.9 26.6 114.5 29.6M96.6 35.1Q90.5 39.2 87.1 46.4M96.6 35.1Q105.3 33.2 114.4 36.2M99.0 41.0Q92.9 44.5 89.4 51.1M99.0 41.0Q105.4 39.9 111.9 42.5" stroke="#0c3216" stroke-width="3.600" fill="none" stroke-linecap="round" transform="translate(.8 1.200)"/><path d="M2.1 62.1Q6.4 65.5 12.2 66.2M2.1 62.1Q-1.1 56.8 -1.1 50.1M6.6 58.6Q12.0 64.0 20.0 66.0M6.6 58.6Q4.0 52.9 4.9 46.3M11.6 55.6Q16.0 61.3 23.3 64.0M11.6 55.6Q9.7 49.6 11.3 43.2M17.1 53.1Q20.3 58.3 26.1 61.2M17.1 53.1Q16.0 47.6 18.1 42.0" stroke="#0c3216" stroke-width="3.600" fill="none" stroke-linecap="round" transform="translate(.8 1.200)"/><path d="M96.8 52.7Q91.6 48.5 84.5 47.5M96.8 52.7Q100.2 58.5 100.1 65.9M91.0 58.0Q85.1 53.9 77.3 53.4M91.0 58.0Q95.6 64.7 96.1 73.4M86.1 63.3Q81.1 60.5 74.9 60.7M86.1 63.3Q89.6 67.5 90.4 73.2" stroke="#0c3216" stroke-width="3.600" fill="none" stroke-linecap="round" transform="translate(.8 1.200)"/><path d="M31.3 63.3Q38.1 65.4 45.4 63.5M31.3 63.3Q25.3 58.7 22.4 51.1M34.1 58.1Q42.0 60.7 50.7 58.7M34.1 58.1Q27.3 52.6 24.0 43.7M37.0 53.0Q46.2 56.2 56.4 54.1M37.0 53.0Q30.6 47.6 27.7 39.0M39.9 47.9Q48.1 51.0 57.4 49.3M39.9 47.9Q31.8 40.8 28.3 29.6M43.0 43.0Q51.9 46.6 62.0 45.0M43.0 43.0Q36.0 36.5 33.2 26.7M46.2 38.2Q56.5 42.7 68.5 41.0M46.2 38.2Q39.0 31.3 36.4 20.9M49.4 33.4Q58.7 37.7 69.7 36.5M49.4 33.4Q42.8 26.7 40.5 16.9M52.8 28.8Q60.7 32.7 70.3 31.9M52.8 28.8Q47.4 23.1 45.7 14.9M56.2 24.2Q63.1 27.8 71.5 27.3M56.2 24.2Q50.8 18.1 49.2 9.4" stroke="#2a9a3c" stroke-width="2.500" fill="none" stroke-linecap="round"/><path d="M1.8 37.0Q8.5 39.6 16.1 38.1M1.8 37.0Q-3.9 32.0 -6.4 24.2M5.3 31.3Q13.3 34.5 22.4 33.1M5.3 31.3Q-0.0 26.3 -2.2 18.7M8.9 25.8Q17.8 29.7 28.1 28.4M8.9 25.8Q2.3 19.3 -0.1 9.6M12.6 20.5Q20.8 24.4 30.5 23.5M12.6 20.5Q6.8 14.5 4.9 5.6M16.4 15.5Q25.6 20.3 36.8 19.6M16.4 15.5Q10.1 8.5 8.2 -1.5M20.2 10.8Q28.5 15.5 38.9 15.1M20.2 10.8Q13.8 3.1 12.2 -7.5M24.1 6.3Q31.5 10.8 40.8 10.8M24.1 6.3Q18.5 -0.9 17.3 -10.7M28.0 2.0Q33.8 5.9 41.3 6.2M28.0 2.0Q23.5 -4.2 22.9 -12.5" stroke="#218432" stroke-width="2.500" fill="none" stroke-linecap="round"/><path d="M49.1 4.6Q43.3 8.3 40.0 14.9M49.1 4.6Q56.7 3.0 64.5 5.7M51.1 9.7Q43.7 14.1 39.4 22.2M51.1 9.7Q58.0 8.5 65.0 11.3M52.9 15.0Q46.1 18.7 42.0 26.0M52.9 15.0Q60.8 13.9 68.6 17.3M54.6 20.4Q45.5 25.0 39.7 34.3M54.6 20.4Q63.5 19.5 72.3 23.6M56.1 25.9Q47.3 30.0 41.4 38.8M56.1 25.9Q65.1 25.2 73.7 29.7M57.5 31.5Q48.7 35.3 42.6 43.7M57.5 31.5Q66.8 31.1 75.6 36.0M58.7 37.2Q50.2 40.5 44.2 48.3M58.7 37.2Q68.4 37.1 77.3 42.4M59.7 43.0Q50.9 46.1 44.6 53.8M59.7 43.0Q69.8 43.2 78.9 49.0M60.6 48.9Q52.1 51.6 45.8 58.9M60.6 48.9Q70.0 49.3 78.5 55.1M61.3 54.8Q53.1 57.2 46.9 64.0M61.3 54.8Q70.0 55.5 77.7 61.1M61.8 60.9Q54.7 62.7 49.3 68.4M61.8 60.9Q68.1 61.6 73.6 65.8" stroke="#259038" stroke-width="2.500" fill="none" stroke-linecap="round"/><path d="M76.2 2.5Q71.3 8.6 70.2 16.9M76.2 2.5Q83.1 -1.5 91.7 -1.4M80.4 7.6Q74.3 14.4 72.5 24.0M80.4 7.6Q87.8 3.8 96.8 4.4M84.3 12.9Q77.5 19.7 75.2 29.7M84.3 12.9Q91.9 9.4 100.9 10.4M87.8 18.3Q80.2 25.2 77.1 35.9M87.8 18.3Q96.9 14.7 107.2 16.4M91.1 23.8Q84.1 29.5 80.9 38.6M91.1 23.8Q99.1 21.0 108.0 23.0M94.0 29.4Q86.0 35.3 82.0 45.1M94.0 29.4Q103.9 26.6 114.5 29.6M96.6 35.1Q90.5 39.2 87.1 46.4M96.6 35.1Q105.3 33.2 114.4 36.2M99.0 41.0Q92.9 44.5 89.4 51.1M99.0 41.0Q105.4 39.9 111.9 42.5" stroke="#1f7e30" stroke-width="2.500" fill="none" stroke-linecap="round"/><path d="M2.1 62.1Q6.4 65.5 12.2 66.2M2.1 62.1Q-1.1 56.8 -1.1 50.1M6.6 58.6Q12.0 64.0 20.0 66.0M6.6 58.6Q4.0 52.9 4.9 46.3M11.6 55.6Q16.0 61.3 23.3 64.0M11.6 55.6Q9.7 49.6 11.3 43.2M17.1 53.1Q20.3 58.3 26.1 61.2M17.1 53.1Q16.0 47.6 18.1 42.0" stroke="#1f7e30" stroke-width="2.500" fill="none" stroke-linecap="round"/><path d="M96.8 52.7Q91.6 48.5 84.5 47.5M96.8 52.7Q100.2 58.5 100.1 65.9M91.0 58.0Q85.1 53.9 77.3 53.4M91.0 58.0Q95.6 64.7 96.1 73.4M86.1 63.3Q81.1 60.5 74.9 60.7M86.1 63.3Q89.6 67.5 90.4 73.2" stroke="#1a6e2a" stroke-width="2.500" fill="none" stroke-linecap="round"/></g>
      <path d="M30 66Q42 42 58 22" stroke="#4a3218" stroke-width=".8" fill="none"/><path d="M0 40Q14 16 30 0" stroke="#4a3218" stroke-width=".8" fill="none"/><path d="M48 2Q60 30 62 64" stroke="#4a3218" stroke-width=".8" fill="none"/><path d="M74 0Q92 20 100 44" stroke="#4a3218" stroke-width=".8" fill="none"/>
      <rect width="100" height="66" fill="#0a3014" opacity=".01" filter="url(#gr2)"/>
    </svg></div>
    <div class="cap" style="left:279px;top:416px"><b>Dew</b>Luca Bravo<br><i>3840x2560</i></div>

    <!-- Alberta -->
    <div class="th" style="left:434px;top:335px;height:66px"><svg width="100" height="66" viewBox="0 0 100 66">
      <defs><linearGradient id="al1" x1="0" y1="0" x2="0" y2="1"><stop offset="0" stop-color="#bcbcb6"/><stop offset=".3" stop-color="#ecece8"/><stop offset="1" stop-color="#cfd0cc"/></linearGradient></defs>
      <rect width="100" height="66" fill="url(#al1)"/>
      <ellipse cx="28" cy="5" rx="30" ry="6" fill="#8c8c88" filter="url(#b3)"/>
      <ellipse cx="84" cy="8" rx="18" ry="8" fill="#f3f3f0" filter="url(#b3)"/>
      <ellipse cx="4" cy="28" rx="7" ry="8" fill="#a2a29e" filter="url(#b3)"/>
      <g filter="url(#bh)"><path d="M2 44l10-8 6-6 4-4 6 5 4-6 8-3 8-1 4 6 6-6 4-14 4-4 6 4 4 8 2 8 8 2 14-8v48h-94z" fill="#5a5f6c" filter="url(#gr1)"/></g>
      <path d="M18 29l4-3 6 5-5 3zM32 26l8-3 10-1 3 6-12 3z" fill="#dcdedf" filter="url(#bh)"/>
      <path d="M58 24q4-4 8 2 6 6 14 0 6 2 8 8-2 10-12 14-10 4-18 2-4-8-2-16 2-4 2-10z" fill="#eaebe8" filter="url(#b2)"/>
      <path d="M10 40q10-8 24-4 8 4 16 4-6 10-20 12-12-2-20-12z" fill="#eff0ef" filter="url(#b2)"/>
      <path d="M60 14l4-5 4 0 6 6 2 8-6 6-8-3-3-6z" fill="#474b58" filter="url(#bh)"/>
      <path d="M52 34l6-8 6 6-2 10-8 2z" fill="#4f5462" filter="url(#b1)"/>
      <g filter="url(#b1)"><path d="M80 30l8-4 12-8v38l-22 6q-4-16 2-32z" fill="#4a4746"/></g>
      <path d="M30 54q22-10 50-14l-6 16-34 4z" fill="#b4b5a8" filter="url(#b1)"/>
      <path d="M56 50q10-6 20-8l-2 8-10 4z" fill="#8c9a70" opacity=".8" filter="url(#b1)"/>
      <path d="M0 37q14 8 30 17 24 1 52 3l18 1v8h-100z" fill="#161f0e" filter="url(#bh)"/>
      <g filter="url(#bh)"><path d="M74 66l2-8 2-6 2 6 2-3 2 5 3-8 2 6 3-4 2-6 2 6 4-8v20z" fill="#5f7e1e" filter="url(#grg)"/></g>
    </svg></div>
    <div class="cap" style="left:416.5px;top:416px"><b>Alberta</b>Matheus Bandoch<br><i>3840x2543</i></div>

    <!-- row 4 (clipped) -->
    <div class="th" style="left:20px;top:492px;height:66px"><svg width="100" height="66" viewBox="0 0 100 66">
      <defs><linearGradient id="r41" x1="0" y1="0" x2="0" y2="1"><stop offset="0" stop-color="#1b2550"/><stop offset=".35" stop-color="#3a4a7a"/><stop offset=".5" stop-color="#c2623a"/><stop offset="1" stop-color="#100c10"/></linearGradient></defs>
      <rect width="100" height="66" fill="url(#r41)"/>
      <path d="M52 0h48v30h-30q-10-4-12-12-8-8-6-18z" fill="#050507" filter="url(#b1)"/>
      <path d="M0 0h20q6 10 4 22l4 8h-28z" fill="#3a1e18" filter="url(#b1)"/>
      <path d="M36 6q8 2 10 14l-2 10h-12q-2-14 4-24z" fill="#1a1c2a" filter="url(#b1)"/>
      <g fill="#ffd56a" filter="url(#bh)"><circle cx="30" cy="11" r="2"/><circle cx="33" cy="14" r="2"/><circle cx="28" cy="15" r="1.800"/></g>
    </svg></div>
    <div class="th" style="left:158px;top:491px;height:66px"><svg width="100" height="66" viewBox="0 0 100 66">
      <defs><linearGradient id="r42" x1="0" y1="0" x2="0" y2="1"><stop offset="0" stop-color="#b8a0d8"/><stop offset=".2" stop-color="#d9a8c8"/><stop offset=".34" stop-color="#e8d9a0"/><stop offset=".42" stop-color="#5a5a78"/><stop offset="1" stop-color="#3a6a20"/></linearGradient></defs>
      <rect width="100" height="66" fill="url(#r42)"/>
      <ellipse cx="40" cy="8" rx="24" ry="6" fill="#f09aa8" filter="url(#b2)"/>
      <ellipse cx="8" cy="9" rx="8" ry="3.500" fill="#6a5a98" filter="url(#b1)"/>
      <ellipse cx="74" cy="6" rx="10" ry="6" fill="#7a62b0" filter="url(#b2)"/>
      <path d="M40 26q20-6 34-18 10-8 26-8v66h-100v-38q20 0 40-2z" fill="#3f7a1e" filter="url(#bh)"/>
      <path d="M84 0h16v30h-20q6-16 4-30z" fill="#223a12" filter="url(#b1)"/>
      <path d="M71 28q2-14 8-22l2 2q-3 10-3 20z" fill="#f2f4f8"/>
    </svg></div>
    <div class="th" style="left:296px;top:489px;height:66px"><svg width="100" height="66" viewBox="0 0 100 66">
      <defs><linearGradient id="r43" x1="0" y1="0" x2="0" y2="1"><stop offset="0" stop-color="#3fb0ea"/><stop offset=".4" stop-color="#86d2f4"/><stop offset="1" stop-color="#e8f2fa"/></linearGradient></defs>
      <rect width="100" height="66" fill="url(#r43)"/>
      <path d="M20 6l60 10" stroke="#b6e2f8" stroke-width="2.500" opacity=".7" filter="url(#b1)"/>
      <g filter="url(#bh)"><path d="M9 0l3 5 2 6 3 6 2 8 2 8h-21v-14l3-8 3-6zM93 3l3 8 2 8 2 6v8h-14l2-10 2-10zM25 19l3 7 2 7h-9zM34 18l3 8 1 7h-8zM56 20l2 6 2 7h-7zM65 20l2 6 2 7h-7zM72 19l2 7 2 7h-7zM84 24l2 5 1 4h-5z" fill="#e6eef6" filter="url(#gr2)"/></g>
    </svg></div>
    <div class="th" style="left:434px;top:490px;height:66px"><svg width="100" height="66" viewBox="0 0 100 66">
      <defs><linearGradient id="r44" x1="0" y1="0" x2="1" y2="0"><stop offset="0" stop-color="#efbcb6"/><stop offset=".25" stop-color="#d8a8aa"/><stop offset=".42" stop-color="#a496a4"/><stop offset=".6" stop-color="#4a6a4a"/><stop offset=".9" stop-color="#3a6034"/><stop offset="1" stop-color="#8a9aa6"/></linearGradient></defs>
      <rect width="100" height="66" fill="url(#r44)"/>
      <ellipse cx="30" cy="16" rx="9" ry="10" fill="#9a8ea8" opacity=".6" filter="url(#b3)"/>
      <path d="M14 0h86v5q-16 4-30 2-14 4-28 0-16-2-28-7z" fill="#24502a" filter="url(#b1)"/>
      <path d="M56 0h24v2.500h-22z" fill="#c8441e" filter="url(#bh)"/>
      <g stroke="#2a642c" stroke-width="1.600" fill="none" filter="url(#bh)"><path d="M64 30l18-22M66 30l26-18M70 30l28-10M62 26l10-20M74 30l24-4M60 22l4-16M58 10l-14 6M60 14l-12 10"/></g>
      <g stroke="#86bc72" stroke-width=".9" fill="none"><path d="M65 29l20-20M69 30l27-13M61 24l10-17M59 12l-12 8"/></g>
      <circle cx="50" cy="9" r="1.600" fill="#eef2f2"/><circle cx="65" cy="27" r="1.200" fill="#e8eee8"/>
    </svg></div>
    <svg class="abs" style="left:0;top:517px" width="601" height="2"><path d="M0 .5h601" stroke="#bdbdbd" stroke-width="1" stroke-dasharray="5 5" opacity=".8"/></svg>
  </div>
</div>

<div id="panel">
  <!-- PANEL -->
  <svg class="abs" style="left:4px;top:4px" width="21" height="19" viewBox="0 0 21 19">
    <defs><linearGradient id="mlg" x1="0" y1="0" x2="0" y2="1"><stop offset="0" stop-color="#a6d96a"/><stop offset="1" stop-color="#78b83a"/></linearGradient></defs>
    <path d="M0 0H14.500Q20.200 0 20.200 5.700V18H9Q3 18 3 12V5Q3 3.200 0 3.200z" fill="#f6f6f6"/>
    <path d="M2.200 2H14.300Q18.400 2 18.400 6V16.300H9.200Q4.800 16.300 4.800 12V4.600Q4.800 2.800 2.200 2z" fill="url(#mlg)"/>
    <path d="M6.800 3.200V10.800Q6.800 13.200 9.200 13.200H14.400Q16.600 13.200 16.600 10.800V7.200Q16.600 5.300 14.950 5.300Q13.300 5.300 13.300 7.200V10.600M13.300 7.200Q13.300 5.300 11.650 5.300Q10 5.300 10 7.200V10.600" fill="none" stroke="#fff" stroke-width="1.300"/>
  </svg>
  <div class="abs" style="left:28px;top:5px;font-size:12.600px;line-height:16px;font-weight:bold;color:#dcdcdc;letter-spacing:0">Menu</div>
  <!-- show desktop -->
  <svg class="abs" style="left:72px;top:4px" width="23" height="19" viewBox="0 0 23 19">
    <rect x=".5" y=".5" width="22" height="3" fill="#e4e4e4"/>
    <rect x=".5" y="3.500" width="22" height="14.500" fill="#86ad5a"/>
    <rect x="4" y="12.500" width="15" height="5.500" fill="#4e7034"/>
  </svg>
  <!-- firefox -->
  <svg class="abs" style="left:105px;top:4px" width="20" height="19" viewBox="0 0 20 19"><use href="#ffx"/></svg>
  <!-- terminal -->
  <svg class="abs" style="left:129px;top:4px" width="20" height="19" viewBox="0 0 20 19">
    <rect x="1" y="1" width="18" height="17" rx="1.500" fill="#1d1822" stroke="#d9d9d9" stroke-width="1.400"/>
    <path d="M5 7l3 2.200-3 2.200" fill="none" stroke="#f2f2f2" stroke-width="1.200"/><path d="M9 12h4" stroke="#f2f2f2" stroke-width="1.200"/>
  </svg>
  <!-- folder -->
  <svg class="abs" style="left:153px;top:4px" width="20" height="19" viewBox="0 0 20 19">
    <path d="M1 3.500q0-1 1-1h5l1.500 1.800h9.500q1 0 1 1v2h-18z" fill="#d6dccb"/>
    <rect x=".8" y="5.500" width="18.400" height="12.500" rx="1" fill="#8bb35e"/>
    <rect x=".8" y="5.500" width="18.400" height="1" fill="#a9c884"/>
  </svg>
  <!-- camera -->
  <svg class="abs" style="left:177px;top:4px" width="21" height="19" viewBox="0 0 21 19">
    <rect x=".8" y="4" width="19.400" height="12.500" rx="1.800" fill="#cfcfcf" stroke="#8e8e8e" stroke-width=".8"/>
    <rect x="2.500" y="2.500" width="4" height="2" fill="#bdbdbd"/>
    <circle cx="12" cy="10.500" r="4.800" fill="#8d8d8d"/><circle cx="12" cy="10.500" r="3.400" fill="#3c3a44"/><circle cx="12" cy="10.500" r="1.600" fill="#16151c"/><circle cx="11" cy="9.300" r=".8" fill="#e8e8f4"/>
    <rect x="2.500" y="6" width="3.500" height="1.800" fill="#f4f4f4"/>
  </svg>
  <!-- window list -->
  <div class="abs" style="left:205px;top:1px;width:160px;height:26px;background:linear-gradient(#444,#3a3a3a);border:1px solid #2a2a2a;border-bottom:0;border-radius:3px 3px 0 0;box-shadow:inset 0 1px 0 #555"></div>
  <svg class="abs" style="left:207px;top:4px" width="17" height="17" viewBox="0 0 20 19"><use href="#ffx"/></svg>
  <div class="abs" style="left:227px;top:4px;font-size:12.200px;line-height:16px;color:#e6e6e6;white-space:nowrap">[Add New Post ‹ Fre...</div>
  <div class="abs" style="left:368px;top:1px;width:160px;height:26px;background:linear-gradient(#6a6a6a,#555 60%,#4c4c4c);border:1px solid #2c2c2c;border-bottom:0;border-radius:3px 3px 0 0;box-shadow:inset 0 1px 0 #858585"></div>
  <svg class="abs" style="left:371px;top:4px" width="17" height="17" viewBox="0 0 17 17">
    <rect x="1" y="1" width="15" height="15" rx="2" fill="#2c2c2c" stroke="#b4b4b4" stroke-width="1.200"/>
    <path d="M4 13q1-6 8-9M6 13q2-4 7-5" fill="none" stroke="#dcdcdc" stroke-width="1.200"/><circle cx="11" cy="11" r="1.500" fill="#bdbdbd"/>
  </svg>
  <div class="abs" style="left:390px;top:4px;font-size:12.400px;line-height:16px;color:#f0f0f0;white-space:nowrap">Backgrounds</div>
  <!-- tray -->
  <svg class="abs" style="left:1206px;top:3px" width="14" height="19" viewBox="0 0 14 19">
    <ellipse cx="7" cy="9.500" rx="6.400" ry="8.600" fill="#2f6fc0"/><ellipse cx="7" cy="7" rx="5" ry="5.500" fill="#4d8ad6" opacity=".6"/>
    <path d="M3.800 6.200l6.200 6-3 2.800v-11l3 2.800-6.200 6" fill="none" stroke="#fff" stroke-width="1.200"/>
  </svg>
  <svg class="abs" style="left:1228px;top:6px" width="14" height="15" viewBox="0 0 14 15">
    <rect x="1.200" y="1.200" width="11.600" height="12.600" rx="1.200" fill="#2e2e2e" stroke="#cdcdcd" stroke-width="1.300"/>
    <circle cx="6.500" cy="7" r="3.300" fill="#d8d8d8"/><circle cx="6.500" cy="7" r="1" fill="#333"/><path d="M7 8l3.500 3.500" stroke="#cfcfcf" stroke-width="1.300"/>
  </svg>
  <svg class="abs" style="left:1247px;top:6px" width="16" height="15" viewBox="0 0 16 15">
    <path d="M8 .8q3.200 0 3.200 3.800 0 2.800-1.600 4 .2 1.600 2.400 2.400 3 1 3.200 3h-14.400q.2-2 3.200-3 2.200-.8 2.400-2.400-1.600-1.200-1.600-4 0-3.800 3.200-3.800z" fill="#dcdcdc"/>
  </svg>
  <svg class="abs" style="left:1267px;top:7px" width="16" height="13" viewBox="0 0 16 13">
    <g fill="none" stroke="#a9a9a9" stroke-width="1.400" stroke-linecap="round"><path d="M1.800 5q6.200-5.200 12.400 0" stroke="#8c8c8c"/><path d="M3.800 7.400q4.200-3.600 8.400 0"/><path d="M5.800 9.700q2.200-1.800 4.400 0" stroke="#c4c4c4"/></g><circle cx="8" cy="11.500" r="1.100" fill="#cfcfcf"/>
  </svg>
  <svg class="abs" style="left:1287px;top:5px" width="16" height="17" viewBox="0 0 16 17">
    <rect x="3.500" y=".8" width="4" height="2" fill="#cfcfcf"/>
    <rect x="1.200" y="2.500" width="8.600" height="12.500" rx="1" fill="#8a8a8a" stroke="#d4d4d4" stroke-width="1.300"/>
    <path d="M12 4l-3.500 6h2.500l-1 5 4-6.500h-2.500z" fill="#f4f4f4" stroke="#3a3a3a" stroke-width=".5"/>
  </svg>
  <div class="abs" style="left:1308px;top:5px;font-size:12.200px;line-height:16px;color:#e4e4e4;white-space:nowrap">16:57</div>
  <svg class="abs" style="left:1344px;top:6px" width="17" height="15" viewBox="0 0 17 15">
    <path d="M1 5h2.500l4-3.500v12l-4-3.500h-2.500z" fill="#cfcfcf"/>
    <g fill="none" stroke="#cfcfcf" stroke-width="1.300" stroke-linecap="round"><path d="M9.500 5q1.500 2.500 0 5"/><path d="M11.800 3.200q2.600 4.300 0 8.600"/><path d="M14 1.500q3.600 6 0 12" opacity=".55"/></g>
  </svg>
</div>

</body>
</html>
